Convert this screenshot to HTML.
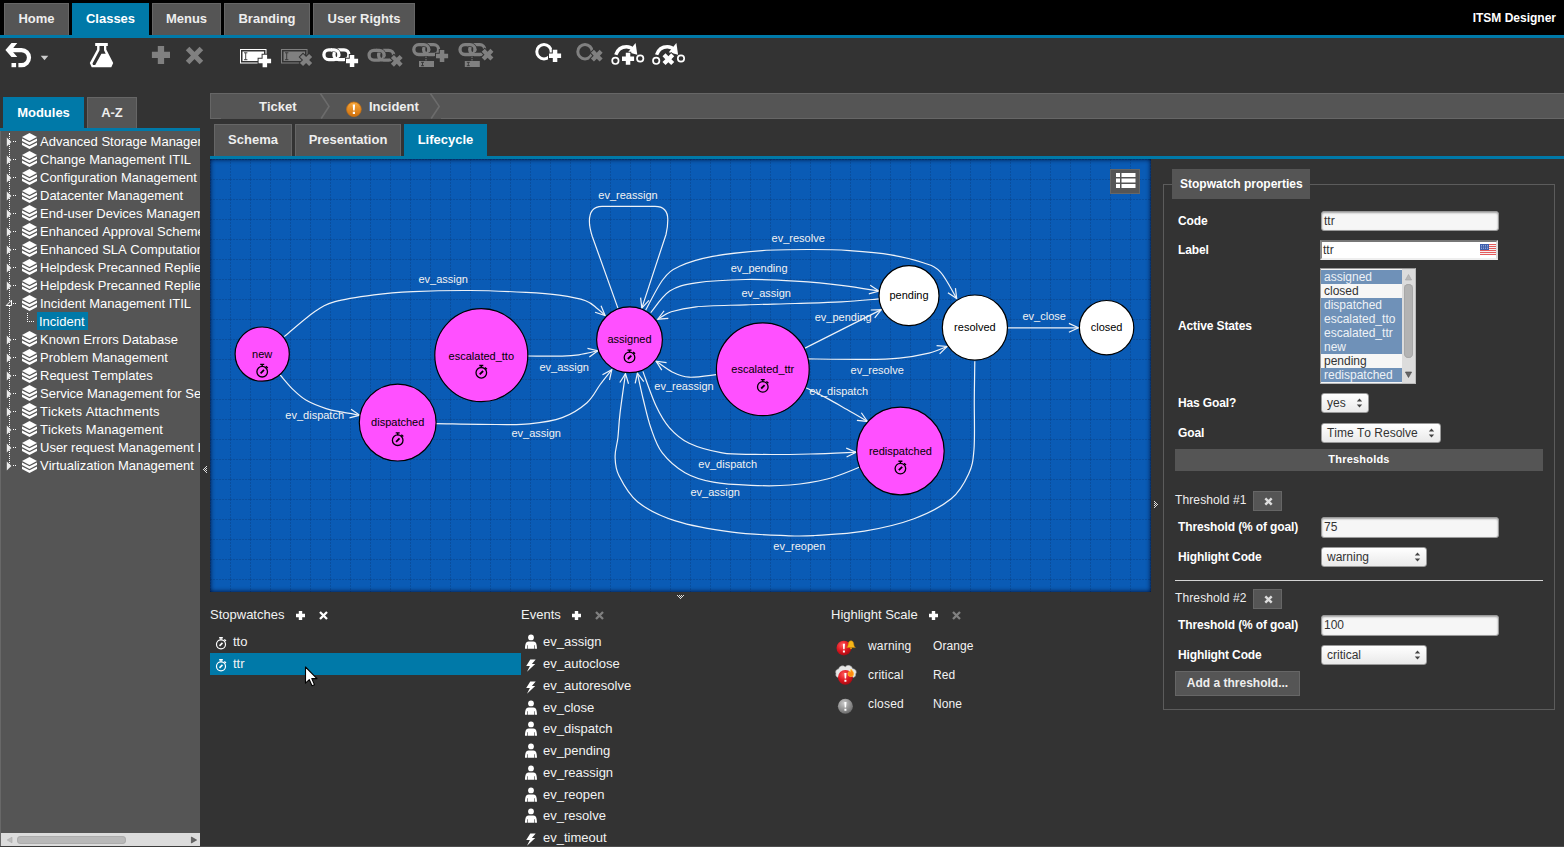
<!DOCTYPE html>
<html lang="en">
<head>
<meta charset="utf-8">
<title>ITSM Designer</title>
<style>
*{box-sizing:border-box;margin:0;padding:0}
html,body{width:1564px;height:847px;overflow:hidden;background:#333;color:#fff;font-family:"Liberation Sans",Arial,sans-serif;font-size:13px;font-kerning:none;text-rendering:optimizeSpeed}
.abs{position:absolute}
#top{position:absolute;left:0;top:0;width:1564px;height:35px;background:#000}
#topline{position:absolute;left:0;top:35px;width:1564px;height:3px;background:#0079a8}
.tab{position:absolute;background:#555;border:1px solid #666;color:#eee;font-weight:bold;font-size:13px;text-align:center;white-space:nowrap}
.tab.on{background:#0079a8;border-color:#0079a8;color:#fff}
#top .tab{top:3px;height:32px;line-height:30px;border-bottom:none}
#title{position:absolute;right:8px;top:11px;font-size:12px;font-weight:bold;line-height:15px;color:#fff}
/* left panel */
#ltabs .tab{top:97px;height:31px;line-height:29px;border-bottom:none}
#lline{position:absolute;left:0;top:128px;width:200px;height:3px;background:#0079a8}
#tree{position:absolute;left:0;top:131px;width:200px;height:716px;background:#555;overflow:hidden;box-shadow:inset 1px 0 0 #686868}
.tr{position:absolute;left:0;height:18px;line-height:18px;white-space:nowrap;font-size:13px;color:#fff}
.tr .tx{position:absolute;left:40px;top:0}
.tr svg{position:absolute;left:22px;top:0}
#hs{position:absolute;left:1px;top:833px;width:199px;height:13px;background:#dcdcdc}
/* centre */
#crumb{position:absolute;left:210px;top:93px;width:1354px;height:26px;background:#555;border:1px solid #666;border-right:none}
#crumb .t{position:absolute;top:0;line-height:25px;font-weight:bold;font-size:13px;color:#eee}
#ctabs .tab{top:124px;height:32px;line-height:30px;border-bottom:none}
#cline{position:absolute;left:210px;top:156px;width:1354px;height:3px;background:#0079a8}
#canvas{position:absolute;left:210px;top:159px;width:941px;height:433px;background:#0a5bb5;overflow:hidden}
#canvas:after{content:"";position:absolute;left:0;top:0;right:0;bottom:0;box-shadow:inset 0 0 5px 0 rgba(0,0,25,.9);pointer-events:none}
/* right */
#fs{position:absolute;left:1163px;top:184px;width:392px;height:526px;border:1px solid #5c5c5c}
#legend{position:absolute;left:1172px;top:169px;width:138px;height:30px;background:#555;font-weight:bold;font-size:12px;line-height:30px;padding-left:8px;color:#fff}
.lbl{position:absolute;left:1178px;font-weight:bold;font-size:12px;line-height:14px;color:#fff;white-space:nowrap;letter-spacing:-.12px}
.inp{position:absolute;background:#f6f6f6;border:1px solid #999;border-radius:3px;color:#333;font-size:12px;line-height:16px;padding-left:2px;box-shadow:inset 0 1px 2px rgba(0,0,0,.35)}
.sel{position:absolute;background:linear-gradient(#fff,#e9e9e9);border:1px solid #999;border-radius:3px;color:#333;font-size:12px;line-height:16px;padding-left:5px}
.txt{position:absolute;font-size:13px;line-height:15px;color:#eee;white-space:nowrap}
.btn{position:absolute;background:#555;border:1px solid #666;color:#eee;font-weight:bold;font-size:12px;text-align:center}
</style>
</head>
<body>
<div id="top">
  <div class="tab" style="left:4px;width:65px">Home</div>
  <div class="tab on" style="left:72px;width:77px">Classes</div>
  <div class="tab" style="left:152px;width:69px">Menus</div>
  <div class="tab" style="left:224px;width:86px">Branding</div>
  <div class="tab" style="left:313px;width:102px">User Rights</div>
  <div id="title">ITSM Designer</div>
</div>
<div id="topline"></div>
<!--TOOLBAR-->
<svg class="abs" style="left:0;top:38px" width="720" height="44" viewBox="0 38 720 44">
<path d="M17.3,43H11.5L5.4,50L11.5,57H17.3L13.2,52.2V48z" fill="#fff"/>
<path d="M12.5,50.1H21.5A7.5,7.5 0 0 1 21.5,65.1H18.4" fill="none" stroke="#fff" stroke-width="4.2"/>
<rect x="11.5" y="63" width="4.6" height="4.2" fill="#fff"/>
<path d="M40.7,55.8H48.3L44.5,60.3z" fill="#ccc"/>
<path fill-rule="evenodd" d="M95.2,43H107.8V46H106.3V49.5L113.2,63L111.3,67.2H91.7L89.8,63L97.1,49.5V46H95.2z M99.5,46H104V50.2L105.7,53.7H101.4L95.2,65H93L92.5,63.6L99.5,50.3z" fill="#fff"/>
<path d="M157.8,45.9h6.3v5.9h5.9v6.3h-5.9v5.9h-6.3v-5.9h-5.9v-6.3h5.9z" fill="#808080"/>
<path d="M187.6,48.4L201.4,62.6M201.4,48.4L187.6,62.6" stroke="#808080" stroke-width="5" fill="none"/>
<rect x="240.5" y="49.5" width="25.5" height="13.5" fill="none" stroke="#fff"/><rect x="242.5" y="51.5" width="21.5" height="9.5" fill="#fff"/>
<path d="M244,52.8h3.4M244,59.7h3.4M245.7,52.8v6.9" stroke="#333" stroke-width="0.9" fill="none"/>
<path d="M262.6,54.7h4.5v4.0h4.0v4.5h-4.0v4.0h-4.5v-4.0h-4.0v-4.5h4.0z" fill="#fff" stroke="#333" stroke-width="2" paint-order="stroke"/>
<rect x="281.5" y="49.5" width="25.5" height="13.5" fill="none" stroke="#808080"/><rect x="283.5" y="51.5" width="21.5" height="9.5" fill="#808080"/>
<path d="M285,52.8h3.4M285,59.7h3.4M286.7,52.8v6.9" stroke="#333" stroke-width="0.9" fill="none"/>
<g transform="rotate(45 306.0 60.0)"><path d="M303.9,53.5h4.3v4.3h4.3v4.3h-4.3v4.3h-4.3v-4.3h-4.3v-4.3h4.3z" fill="#808080" stroke="#333" stroke-width="2" paint-order="stroke"/></g>
<rect x="323.9" y="49.8" width="15.0" height="9.8" rx="4.9" fill="none" stroke="#fff" stroke-width="3.3"/><path d="M341.4,49.8 h-2.6 a4.9,4.9 0 0 1 0,9.8 h2.6" fill="none" stroke="#333" stroke-width="4.5"/><rect x="333.9" y="49.8" width="15.0" height="9.8" rx="4.9" fill="none" stroke="#fff" stroke-width="3.3"/><path d="M332.0,49.8 h2 a4.9,4.9 0 0 1 4.9,4.9" fill="none" stroke="#333" stroke-width="4.5"/><path d="M331.0,49.8 h3 a4.9,4.9 0 0 1 4.9,4.9 v0.6" fill="none" stroke="#fff" stroke-width="3.3"/>
<path d="M349.8,54.9h4.5v3.8h3.8v4.5h-3.8v3.8h-4.5v-3.8h-3.8v-4.5h3.8z" fill="#fff" stroke="#333" stroke-width="2" paint-order="stroke"/>
<rect x="369.1" y="50.3" width="15.0" height="9.8" rx="4.9" fill="none" stroke="#808080" stroke-width="3.3"/><path d="M386.1,50.3 h-2.6 a4.9,4.9 0 0 1 0,9.8 h2.6" fill="none" stroke="#333" stroke-width="4.5"/><rect x="378.6" y="50.3" width="15.0" height="9.8" rx="4.9" fill="none" stroke="#808080" stroke-width="3.3"/><path d="M377.2,50.3 h2 a4.9,4.9 0 0 1 4.9,4.9" fill="none" stroke="#333" stroke-width="4.5"/><path d="M376.2,50.3 h3 a4.9,4.9 0 0 1 4.9,4.9 v0.6" fill="none" stroke="#808080" stroke-width="3.3"/>
<g transform="rotate(45 396.7 60.8)"><path d="M394.6,54.6h4.3v4.0h4.0v4.3h-4.0v4.0h-4.3v-4.0h-4.0v-4.3h4.0z" fill="#808080" stroke="#333" stroke-width="2" paint-order="stroke"/></g>
<rect x="413.8" y="44.7" width="15.0" height="9.8" rx="4.9" fill="none" stroke="#808080" stroke-width="3.3"/><path d="M431.1,44.7 h-2.6 a4.9,4.9 0 0 1 0,9.8 h2.6" fill="none" stroke="#333" stroke-width="4.5"/><rect x="423.6" y="44.7" width="15.0" height="9.8" rx="4.9" fill="none" stroke="#808080" stroke-width="3.3"/><path d="M421.9,44.7 h2 a4.9,4.9 0 0 1 4.9,4.9" fill="none" stroke="#333" stroke-width="4.5"/><path d="M420.9,44.7 h3 a4.9,4.9 0 0 1 4.9,4.9 v0.6" fill="none" stroke="#808080" stroke-width="3.3"/>
<path d="M439.8,49.9h4.5v3.8h3.8v4.5h-3.8v3.8h-4.5v-3.8h-3.8v-4.5h3.8z" fill="#808080" stroke="#333" stroke-width="2" paint-order="stroke"/>
<path d="M426,56.5V61" stroke="#808080" stroke-width="1" stroke-dasharray="1.5,1" fill="none"/>
<rect x="419.0" y="61.0" width="15" height="6" fill="#808080"/><path d="M421.0,62.3h3M421.0,65.7h3M422.5,62.3v3.4" stroke="#333" stroke-width="0.9" fill="none"/>
<rect x="460.0" y="44.7" width="15.0" height="9.8" rx="4.9" fill="none" stroke="#808080" stroke-width="3.3"/><path d="M477.2,44.7 h-2.6 a4.9,4.9 0 0 1 0,9.8 h2.6" fill="none" stroke="#333" stroke-width="4.5"/><rect x="469.7" y="44.7" width="15.0" height="9.8" rx="4.9" fill="none" stroke="#808080" stroke-width="3.3"/><path d="M468.1,44.7 h2 a4.9,4.9 0 0 1 4.9,4.9" fill="none" stroke="#333" stroke-width="4.5"/><path d="M467.1,44.7 h3 a4.9,4.9 0 0 1 4.9,4.9 v0.6" fill="none" stroke="#808080" stroke-width="3.3"/>
<g transform="rotate(45 487.5 54.7)"><path d="M485.4,48.5h4.3v4.0h4.0v4.3h-4.0v4.0h-4.3v-4.0h-4.0v-4.3h4.0z" fill="#808080" stroke="#333" stroke-width="2" paint-order="stroke"/></g>
<path d="M472,56.5V61" stroke="#808080" stroke-width="1" stroke-dasharray="1.5,1" fill="none"/>
<rect x="464.8" y="61.0" width="15" height="6" fill="#808080"/><path d="M466.8,62.3h3M466.8,65.7h3M468.3,62.3v3.4" stroke="#333" stroke-width="0.9" fill="none"/>
<circle cx="544" cy="51.7" r="7.2" fill="none" stroke="#fff" stroke-width="3"/>
<path d="M552.8,49.8h4.5v3.8h3.8v4.5h-3.8v3.8h-4.5v-3.8h-3.8v-4.5h3.8z" fill="#fff" stroke="#333" stroke-width="2" paint-order="stroke"/>
<circle cx="585" cy="51.7" r="7.2" fill="none" stroke="#808080" stroke-width="3"/>
<g transform="rotate(45 596.7 55.7)"><path d="M594.6,49.5h4.3v4.0h4.0v4.3h-4.0v4.0h-4.3v-4.0h-4.0v-4.3h4.0z" fill="#808080" stroke="#333" stroke-width="2" paint-order="stroke"/></g>
<g transform="translate(0.0,0)">
<path d="M615.8,54.8Q618.5,46.8 626.5,46.8Q631,46.8 633.8,50" fill="none" stroke="#fff" stroke-width="3.4"/>
<path d="M635.6,43L637.3,54.8L628,52.2z" fill="#fff"/>
<circle cx="615.4" cy="60.8" r="3.2" fill="none" stroke="#fff" stroke-width="1.7"/><circle cx="640.2" cy="58.5" r="3.2" fill="none" stroke="#fff" stroke-width="1.7"/>
<path d="M625.8,52.7h4.5v3.8h3.8v4.5h-3.8v3.8h-4.5v-3.8h-3.8v-4.5h3.8z" fill="#fff" stroke="#333" stroke-width="2" paint-order="stroke"/>
</g>
<g transform="translate(40.8,0)">
<path d="M615.8,54.8Q618.5,46.8 626.5,46.8Q631,46.8 633.8,50" fill="none" stroke="#fff" stroke-width="3.4"/>
<path d="M635.6,43L637.3,54.8L628,52.2z" fill="#fff"/>
<circle cx="615.4" cy="60.8" r="3.2" fill="none" stroke="#fff" stroke-width="1.7"/><circle cx="640.2" cy="58.5" r="3.2" fill="none" stroke="#fff" stroke-width="1.7"/>
<g transform="rotate(45 627.5 59.2)"><path d="M625.4,53.0h4.3v4.0h4.0v4.3h-4.0v4.0h-4.3v-4.0h-4.0v-4.3h4.0z" fill="#fff" stroke="#333" stroke-width="2" paint-order="stroke"/></g>
</g>
</svg>
<!--/TOOLBAR-->
<div id="ltabs">
  <div class="tab on" style="left:3px;width:81px">Modules</div>
  <div class="tab" style="left:87px;width:50px">A-Z</div>
</div>
<div id="lline"></div>
<div id="tree">
<!--TREE-->
<div class="abs" style="left:9px;top:2px;width:0;height:334px;border-left:1px dotted #fff"></div>
<svg width="0" height="0" style="position:absolute"><defs><g id="stk" fill="#fff"><path d="M7.5,0L15,4L7.5,8L0,4z"/><path d="M0,5.4L7.5,9.3L15,5.4V8L7.5,12L0,8z"/><path d="M0,9.4L7.5,13.3L15,9.4V12L7.5,16L0,12z"/></g></defs></svg>
<div class="abs" style="left:13px;top:10px;width:3px;height:1px;background:linear-gradient(90deg,#fff 1px,transparent 1px,transparent 2px,#fff 2px)"></div>
<svg class="abs" style="left:6px;top:6px" width="6" height="10" viewBox="0 0 6 10"><path d="M0.8,0.4L5.4,5L0.8,9.6z" fill="#ececec"/></svg>
<div class="tr" style="top:2px"><svg width="15" height="16" viewBox="0 0 15 16"><use href="#stk"/></svg><span class="tx">Advanced Storage Management</span></div>
<div class="abs" style="left:13px;top:28px;width:3px;height:1px;background:linear-gradient(90deg,#fff 1px,transparent 1px,transparent 2px,#fff 2px)"></div>
<svg class="abs" style="left:6px;top:24px" width="6" height="10" viewBox="0 0 6 10"><path d="M0.8,0.4L5.4,5L0.8,9.6z" fill="#ececec"/></svg>
<div class="tr" style="top:20px"><svg width="15" height="16" viewBox="0 0 15 16"><use href="#stk"/></svg><span class="tx">Change Management ITIL</span></div>
<div class="abs" style="left:13px;top:46px;width:3px;height:1px;background:linear-gradient(90deg,#fff 1px,transparent 1px,transparent 2px,#fff 2px)"></div>
<svg class="abs" style="left:6px;top:42px" width="6" height="10" viewBox="0 0 6 10"><path d="M0.8,0.4L5.4,5L0.8,9.6z" fill="#ececec"/></svg>
<div class="tr" style="top:38px"><svg width="15" height="16" viewBox="0 0 15 16"><use href="#stk"/></svg><span class="tx">Configuration Management</span></div>
<div class="abs" style="left:13px;top:64px;width:3px;height:1px;background:linear-gradient(90deg,#fff 1px,transparent 1px,transparent 2px,#fff 2px)"></div>
<svg class="abs" style="left:6px;top:60px" width="6" height="10" viewBox="0 0 6 10"><path d="M0.8,0.4L5.4,5L0.8,9.6z" fill="#ececec"/></svg>
<div class="tr" style="top:56px"><svg width="15" height="16" viewBox="0 0 15 16"><use href="#stk"/></svg><span class="tx">Datacenter Management</span></div>
<div class="abs" style="left:13px;top:82px;width:3px;height:1px;background:linear-gradient(90deg,#fff 1px,transparent 1px,transparent 2px,#fff 2px)"></div>
<svg class="abs" style="left:6px;top:78px" width="6" height="10" viewBox="0 0 6 10"><path d="M0.8,0.4L5.4,5L0.8,9.6z" fill="#ececec"/></svg>
<div class="tr" style="top:74px"><svg width="15" height="16" viewBox="0 0 15 16"><use href="#stk"/></svg><span class="tx">End-user Devices Management</span></div>
<div class="abs" style="left:13px;top:100px;width:3px;height:1px;background:linear-gradient(90deg,#fff 1px,transparent 1px,transparent 2px,#fff 2px)"></div>
<svg class="abs" style="left:6px;top:96px" width="6" height="10" viewBox="0 0 6 10"><path d="M0.8,0.4L5.4,5L0.8,9.6z" fill="#ececec"/></svg>
<div class="tr" style="top:92px"><svg width="15" height="16" viewBox="0 0 15 16"><use href="#stk"/></svg><span class="tx">Enhanced Approval Scheme</span></div>
<div class="abs" style="left:13px;top:118px;width:3px;height:1px;background:linear-gradient(90deg,#fff 1px,transparent 1px,transparent 2px,#fff 2px)"></div>
<svg class="abs" style="left:6px;top:114px" width="6" height="10" viewBox="0 0 6 10"><path d="M0.8,0.4L5.4,5L0.8,9.6z" fill="#ececec"/></svg>
<div class="tr" style="top:110px"><svg width="15" height="16" viewBox="0 0 15 16"><use href="#stk"/></svg><span class="tx">Enhanced SLA Computation</span></div>
<div class="abs" style="left:13px;top:136px;width:3px;height:1px;background:linear-gradient(90deg,#fff 1px,transparent 1px,transparent 2px,#fff 2px)"></div>
<svg class="abs" style="left:6px;top:132px" width="6" height="10" viewBox="0 0 6 10"><path d="M0.8,0.4L5.4,5L0.8,9.6z" fill="#ececec"/></svg>
<div class="tr" style="top:128px"><svg width="15" height="16" viewBox="0 0 15 16"><use href="#stk"/></svg><span class="tx">Helpdesk Precanned Replies</span></div>
<div class="abs" style="left:13px;top:154px;width:3px;height:1px;background:linear-gradient(90deg,#fff 1px,transparent 1px,transparent 2px,#fff 2px)"></div>
<svg class="abs" style="left:6px;top:150px" width="6" height="10" viewBox="0 0 6 10"><path d="M0.8,0.4L5.4,5L0.8,9.6z" fill="#ececec"/></svg>
<div class="tr" style="top:146px"><svg width="15" height="16" viewBox="0 0 15 16"><use href="#stk"/></svg><span class="tx">Helpdesk Precanned Replies</span></div>
<div class="abs" style="left:13px;top:172px;width:3px;height:1px;background:linear-gradient(90deg,#fff 1px,transparent 1px,transparent 2px,#fff 2px)"></div>
<svg class="abs" style="left:5px;top:168px" width="8" height="8" viewBox="0 0 8 8"><path d="M6.5,1.2V6.5H1.2z" fill="#666" stroke="#fff" stroke-width="1"/></svg>
<div class="tr" style="top:164px"><svg width="15" height="16" viewBox="0 0 15 16"><use href="#stk"/></svg><span class="tx">Incident Management ITIL</span></div>
<div class="abs" style="left:27px;top:182px;width:0;height:9px;border-left:1px dotted #fff"></div>
<div class="abs" style="left:27px;top:190px;width:7px;height:1px;background:repeating-linear-gradient(90deg,#fff 0,#fff 1px,transparent 1px,transparent 2px)"></div>
<div class="abs" style="left:37px;top:181px;width:51px;height:18px;background:#0079a8"></div>
<div class="tr" style="top:182px"><span class="tx" style="left:39px">Incident</span></div>
<div class="abs" style="left:13px;top:208px;width:3px;height:1px;background:linear-gradient(90deg,#fff 1px,transparent 1px,transparent 2px,#fff 2px)"></div>
<svg class="abs" style="left:6px;top:204px" width="6" height="10" viewBox="0 0 6 10"><path d="M0.8,0.4L5.4,5L0.8,9.6z" fill="#ececec"/></svg>
<div class="tr" style="top:200px"><svg width="15" height="16" viewBox="0 0 15 16"><use href="#stk"/></svg><span class="tx">Known Errors Database</span></div>
<div class="abs" style="left:13px;top:226px;width:3px;height:1px;background:linear-gradient(90deg,#fff 1px,transparent 1px,transparent 2px,#fff 2px)"></div>
<svg class="abs" style="left:6px;top:222px" width="6" height="10" viewBox="0 0 6 10"><path d="M0.8,0.4L5.4,5L0.8,9.6z" fill="#ececec"/></svg>
<div class="tr" style="top:218px"><svg width="15" height="16" viewBox="0 0 15 16"><use href="#stk"/></svg><span class="tx">Problem Management</span></div>
<div class="abs" style="left:13px;top:244px;width:3px;height:1px;background:linear-gradient(90deg,#fff 1px,transparent 1px,transparent 2px,#fff 2px)"></div>
<svg class="abs" style="left:6px;top:240px" width="6" height="10" viewBox="0 0 6 10"><path d="M0.8,0.4L5.4,5L0.8,9.6z" fill="#ececec"/></svg>
<div class="tr" style="top:236px"><svg width="15" height="16" viewBox="0 0 15 16"><use href="#stk"/></svg><span class="tx">Request Templates</span></div>
<div class="abs" style="left:13px;top:262px;width:3px;height:1px;background:linear-gradient(90deg,#fff 1px,transparent 1px,transparent 2px,#fff 2px)"></div>
<svg class="abs" style="left:6px;top:258px" width="6" height="10" viewBox="0 0 6 10"><path d="M0.8,0.4L5.4,5L0.8,9.6z" fill="#ececec"/></svg>
<div class="tr" style="top:254px"><svg width="15" height="16" viewBox="0 0 15 16"><use href="#stk"/></svg><span class="tx">Service Management for Service Providers</span></div>
<div class="abs" style="left:13px;top:280px;width:3px;height:1px;background:linear-gradient(90deg,#fff 1px,transparent 1px,transparent 2px,#fff 2px)"></div>
<svg class="abs" style="left:6px;top:276px" width="6" height="10" viewBox="0 0 6 10"><path d="M0.8,0.4L5.4,5L0.8,9.6z" fill="#ececec"/></svg>
<div class="tr" style="top:272px"><svg width="15" height="16" viewBox="0 0 15 16"><use href="#stk"/></svg><span class="tx" style="letter-spacing:.13px">Tickets Attachments</span></div>
<div class="abs" style="left:13px;top:298px;width:3px;height:1px;background:linear-gradient(90deg,#fff 1px,transparent 1px,transparent 2px,#fff 2px)"></div>
<svg class="abs" style="left:6px;top:294px" width="6" height="10" viewBox="0 0 6 10"><path d="M0.8,0.4L5.4,5L0.8,9.6z" fill="#ececec"/></svg>
<div class="tr" style="top:290px"><svg width="15" height="16" viewBox="0 0 15 16"><use href="#stk"/></svg><span class="tx" style="letter-spacing:.13px">Tickets Management</span></div>
<div class="abs" style="left:13px;top:316px;width:3px;height:1px;background:linear-gradient(90deg,#fff 1px,transparent 1px,transparent 2px,#fff 2px)"></div>
<svg class="abs" style="left:6px;top:312px" width="6" height="10" viewBox="0 0 6 10"><path d="M0.8,0.4L5.4,5L0.8,9.6z" fill="#ececec"/></svg>
<div class="tr" style="top:308px"><svg width="15" height="16" viewBox="0 0 15 16"><use href="#stk"/></svg><span class="tx">User request Management ITIL</span></div>
<div class="abs" style="left:13px;top:334px;width:3px;height:1px;background:linear-gradient(90deg,#fff 1px,transparent 1px,transparent 2px,#fff 2px)"></div>
<svg class="abs" style="left:6px;top:330px" width="6" height="10" viewBox="0 0 6 10"><path d="M0.8,0.4L5.4,5L0.8,9.6z" fill="#ececec"/></svg>
<div class="tr" style="top:326px"><svg width="15" height="16" viewBox="0 0 15 16"><use href="#stk"/></svg><span class="tx">Virtualization Management</span></div>
<!--/TREE-->
</div>
<div id="hs"><div class="abs" style="left:16px;top:3px;width:109px;height:8px;border-radius:4px;background:#b9b9b9;box-shadow:inset 0 0 0 1px #adadad"></div><svg class="abs" style="left:0;top:0" width="200" height="13" viewBox="0 0 200 13"><path d="M6.2,7L11,4.2V9.8z" fill="#bdbdbd" stroke="#aaa" stroke-width="0.6"/><path d="M195.6,7L190.4,4V10z" fill="#666" stroke="#444" stroke-width="0.6"/></svg></div>
<div class="abs" style="left:0;top:846px;width:200px;height:1px;background:#3c3c3c"></div>
<svg class="abs" style="left:202px;top:465px" width="6" height="9" viewBox="202 465 6 9" fill="#ddd" shape-rendering="crispEdges"><path d="M203,469h1v1h-1zM204,468h1v1h-1zM204,470h1v1h-1zM205,467h1v1h-1zM205,469h1v1h-1zM205,471h1v1h-1zM206,466h1v1h-1zM206,468h1v1h-1zM206,470h1v1h-1zM206,472h1v1h-1z"/></svg>
<svg class="abs" style="left:1153px;top:500px" width="6" height="9" viewBox="1153 500 6 9" fill="#ddd" shape-rendering="crispEdges"><path d="M1157,504h1v1h-1zM1156,503h1v1h-1zM1156,505h1v1h-1zM1155,502h1v1h-1zM1155,504h1v1h-1zM1155,506h1v1h-1zM1154,501h1v1h-1zM1154,503h1v1h-1zM1154,505h1v1h-1zM1154,507h1v1h-1z"/></svg>
<svg class="abs" style="left:676px;top:594px" width="9" height="6" viewBox="676 594 9 6" fill="#ddd" shape-rendering="crispEdges"><path d="M677,595h1v1h-1zM679,595h1v1h-1zM681,595h1v1h-1zM683,595h1v1h-1zM678,596h1v1h-1zM680,596h1v1h-1zM682,596h1v1h-1zM679,597h1v1h-1zM681,597h1v1h-1zM680,598h1v1h-1z"/></svg>
<div id="crumb">
  <span class="t" style="left:48px">Ticket</span>
  <span class="t" style="left:158px">Incident</span>
  <div class="abs" style="left:10px;top:24px;width:220px;height:1px;background:#555"></div>
  <svg class="abs" style="left:-1px;top:-1px" width="260" height="26" viewBox="209 93 260 26"><defs><linearGradient id="og" x1="0" y1="0" x2="0" y2="1"><stop offset="0" stop-color="#f7a83c"/><stop offset="1" stop-color="#cf6f0c"/></linearGradient></defs><path d="M319.4,93.5L328,106.4L320.2,118.5M429.4,93.5L438.2,106.4L430.2,118.5" fill="none" stroke="#6c6c6c" stroke-width="1.6"/><circle cx="352.9" cy="109.3" r="7.3" fill="url(#og)" stroke="#c9700f" stroke-width="0.8"/><path d="M351.7,104.6h2.4l-0.45,6h-1.5zM351.8,111.8h2.2v2.1h-2.2z" fill="#fff"/></svg>
</div>
<div id="ctabs">
  <div class="tab" style="left:214px;width:78px">Schema</div>
  <div class="tab" style="left:295px;width:106px">Presentation</div>
  <div class="tab on" style="left:404px;width:83px">Lifecycle</div>
</div>
<div id="cline"></div>
<div id="canvas">
<!--CANVAS-->
<svg class="abs" style="left:0;top:0" width="941" height="433" viewBox="210 159 941 433">
<defs>
<pattern id="g" x="210" y="159" width="20" height="20" patternUnits="userSpaceOnUse"><path d="M0,0.5H20M0.5,0V20" stroke="#084690" stroke-width="1" stroke-dasharray="2,1" stroke-opacity="0.6" fill="none"/></pattern>
<marker id="a" markerUnits="userSpaceOnUse" markerWidth="14" markerHeight="12" refX="12" refY="6" orient="auto"><path d="M2.4,1.6L12,6L2.4,10.4" fill="none" stroke="#eef2f8" stroke-width="1.2"/></marker>
<g id="sw" fill="none" stroke="#000" stroke-width="1.3"><circle cx="0" cy="1" r="5.3"/><path d="M-2,-6.3H2M0,-6.3V-4M3.6,-4.4L5.6,-2.6" stroke-width="1.4"/><path d="M-1.6,2.6L1.8,-0.8" stroke-width="1.8"/></g>
</defs>
<rect x="210" y="159" width="941" height="433" fill="url(#g)"/>
<g fill="none" stroke="#eef2f8" stroke-width="1.2" marker-end="url(#a)">
<path d="M284.3,336.6 C289.3,332.5 305.8,317.8 314.2,312.0 C322.6,306.2 325.0,304.5 335.0,301.6 C345.0,298.7 361.0,296.5 374.0,294.8 C387.0,293.1 396.9,292.3 412.9,291.6 C428.9,290.9 451.1,290.4 470.0,290.5 C488.9,290.6 511.2,291.6 526.1,292.4 C541.0,293.2 549.3,293.8 559.2,295.2 C569.1,296.6 579.3,298.5 585.6,300.7 C591.9,302.9 594.0,306.0 597.2,308.5 C600.5,311.0 603.8,314.3 605.1,315.5"/>
<path d="M280.2,375.0 C282.4,377.4 288.8,385.4 293.1,389.6 C297.5,393.8 300.8,397.1 306.3,400.3 C311.8,403.5 320.1,406.6 326.1,408.6 C332.2,410.6 337.0,411.1 342.6,412.2 C348.2,413.3 356.9,414.7 359.7,415.2"/>
<path d="M527.9,356.0 C533.6,356.0 553.7,356.3 562.2,356.1 C570.7,355.9 572.9,355.7 578.8,354.8 C584.7,353.9 594.6,351.4 597.8,350.7"/>
<path d="M435.8,423.7 C445.9,423.8 480.5,424.5 496.1,424.5 C511.7,424.5 518.2,425.0 529.2,423.9 C540.2,422.8 552.6,421.1 562.2,417.6 C571.8,414.1 580.7,408.2 587.0,402.7 C593.3,397.2 596.1,390.0 600.2,384.5 C604.3,379.0 609.9,372.2 611.8,369.7"/>
<path d="M645.7,310.1 C648.6,305.0 657.4,286.8 663.0,279.5 C668.6,272.2 671.3,270.2 679.6,266.3 C687.9,262.4 698.8,259.0 712.6,256.4 C726.4,253.8 745.7,251.8 762.2,250.6 C778.7,249.4 797.2,249.5 811.8,249.5 C826.4,249.5 836.4,249.7 849.6,250.6 C862.8,251.5 878.5,252.7 890.9,254.8 C903.3,256.9 915.7,260.1 924.0,263.0 C932.3,265.9 935.0,266.2 940.5,272.1 C946.0,278.0 954.0,294.2 956.7,298.6"/>
<path d="M650.7,312.6 C653.9,309.0 662.1,296.1 669.7,291.1 C677.3,286.2 683.4,284.8 696.1,282.9 C708.8,281.0 729.2,279.8 745.7,279.5 C762.2,279.2 779.4,280.2 795.3,281.2 C811.2,282.2 827.3,283.6 841.3,285.3 C855.2,287.0 872.7,290.1 879.0,291.1"/>
<path d="M879.3,298.9 C873.0,299.4 855.3,301.1 841.3,301.9 C827.3,302.7 811.2,303.0 795.3,303.5 C779.4,304.0 762.2,304.2 745.7,304.8 C729.2,305.4 708.5,305.6 696.1,306.8 C683.7,308.0 677.7,309.7 671.3,311.8 C664.9,313.9 660.0,318.0 657.8,319.2"/>
<path d="M805.0,348.1 C817.7,341.7 868.6,316.0 881.3,309.6"/>
<path d="M806.6,358.9 C816.5,359.0 850.7,359.5 866.1,359.4 C881.5,359.3 888.7,359.2 899.2,358.1 C909.7,357.1 920.9,355.0 928.9,353.1 C936.9,351.2 944.1,347.6 947.1,346.5"/>
<path d="M716.4,374.7 C711.9,375.1 696.5,377.6 689.2,377.2 C681.9,376.8 678.1,374.9 672.6,372.2 C667.1,369.5 658.9,363.0 656.1,361.2"/>
<path d="M806.1,387.7 C809.6,389.5 820.4,394.8 827.2,398.4 C834.0,402.0 840.3,405.7 847.0,409.5 C853.7,413.3 864.0,419.4 867.4,421.4"/>
<path d="M642.9,371.4 C645.1,377.2 651.7,396.7 656.1,406.1 C660.5,415.5 663.8,421.4 669.3,427.6 C674.8,433.8 680.4,439.1 689.2,443.3 C698.0,447.5 711.2,451.0 722.2,452.9 C733.2,454.8 740.7,454.2 755.3,454.4 C769.9,454.6 793.2,454.4 810.0,454.0 C826.8,453.6 848.3,452.5 856.0,452.2"/>
<path d="M859.4,467.3 C854.0,469.2 838.8,476.1 827.2,479.0 C815.6,481.9 802.7,483.9 790.0,485.0 C777.3,486.1 763.9,485.9 751.1,485.4 C738.3,484.9 724.3,484.3 713.3,482.2 C702.3,480.1 693.5,477.6 685.0,472.7 C676.5,467.8 668.0,460.3 662.3,452.9 C656.6,445.5 654.1,437.1 651.0,428.3 C647.9,419.5 645.7,409.2 643.4,400.0 C641.1,390.8 638.4,377.6 637.4,373.1"/>
<path d="M974.8,361.2 C974.7,367.7 974.4,385.3 974.3,400.0 C974.2,414.7 975.0,436.9 974.0,449.2 C973.0,461.5 972.4,465.7 968.6,474.0 C964.8,482.3 960.3,491.4 951.2,498.8 C942.1,506.2 928.5,513.3 914.0,518.7 C899.5,524.1 880.9,528.3 864.4,531.1 C847.9,533.9 827.4,534.7 814.8,535.5 C802.2,536.3 802.7,536.3 788.9,535.8 C775.1,535.2 751.1,534.7 732.2,532.2 C713.3,529.7 691.2,525.9 675.5,520.9 C659.8,515.9 647.2,509.6 637.8,502.0 C628.4,494.4 622.7,483.1 618.9,475.5 C615.1,467.9 615.3,463.0 615.1,456.7 C614.9,450.4 617.1,445.1 617.9,437.8 C618.7,430.5 618.8,423.3 620.1,412.6 C621.4,401.9 624.6,380.1 625.5,373.6"/>
<path d="M1007.7,327.8 C1019.5,327.8 1066.7,327.8 1078.5,327.8"/>
<path d="M617.9,308.1 L592.2,236.2 C590.2,230 589.4,226 589.4,221.3 C589.4,212 593,206.4 602,206.4 L655,206.4 C664,206.4 667.8,212 667.8,219.7 C667.8,225 667.4,229 666.0,234.5 L641.8,308.1"/>
</g>
<g font-family="'Liberation Sans',Arial,sans-serif" font-size="11" text-anchor="middle">
<g fill="#f2f2f2">
<text x="443.2" y="283.1">ev_assign</text>
<text x="314.7" y="419.0">ev_dispatch</text>
<text x="564.2" y="370.8">ev_assign</text>
<text x="536.2" y="436.6">ev_assign</text>
<text x="628.0" y="199.0">ev_reassign</text>
<text x="798.2" y="241.5">ev_resolve</text>
<text x="759.1" y="271.8">ev_pending</text>
<text x="766.2" y="296.9">ev_assign</text>
<text x="843.2" y="320.9">ev_pending</text>
<text x="877.2" y="374.0">ev_resolve</text>
<text x="684.0" y="390.4">ev_reassign</text>
<text x="838.7" y="395.4">ev_dispatch</text>
<text x="727.7" y="467.7">ev_dispatch</text>
<text x="715.2" y="495.9">ev_assign</text>
<text x="799.3" y="550.0">ev_reopen</text>
<text x="1044.2" y="319.8">ev_close</text>
</g>
<circle cx="262.2" cy="354.1" r="27.1" fill="#ff50ff" stroke="#000" stroke-width="1.2"/>
<text x="262.2" y="358.4" fill="#000">new</text>
<use href="#sw" x="262.2" y="370.7"/>
<circle cx="481.3" cy="355.2" r="46.5" fill="#ff50ff" stroke="#000" stroke-width="1.2"/>
<text x="481.3" y="359.5" fill="#000">escalated_tto</text>
<use href="#sw" x="481.3" y="371.8"/>
<circle cx="397.7" cy="422.6" r="38.4" fill="#ff50ff" stroke="#000" stroke-width="1.2"/>
<text x="397.7" y="425.9" fill="#000">dispatched</text>
<use href="#sw" x="397.7" y="439.2"/>
<circle cx="629.5" cy="339.8" r="32.9" fill="#ff50ff" stroke="#000" stroke-width="1.2"/>
<text x="629.5" y="343.1" fill="#000">assigned</text>
<use href="#sw" x="629.5" y="356.4"/>
<circle cx="762.8" cy="369.3" r="46.4" fill="#ff50ff" stroke="#000" stroke-width="1.2"/>
<text x="762.8" y="372.6" fill="#000">escalated_ttr</text>
<use href="#sw" x="762.8" y="385.9"/>
<circle cx="909.0" cy="295.7" r="30.0" fill="#fff" stroke="#000" stroke-width="1.2"/>
<text x="909.0" y="299.0" fill="#000">pending</text>
<circle cx="974.9" cy="327.6" r="32.6" fill="#fff" stroke="#000" stroke-width="1.2"/>
<text x="974.9" y="330.9" fill="#000">resolved</text>
<circle cx="1106.6" cy="327.7" r="27.2" fill="#fff" stroke="#000" stroke-width="1.2"/>
<text x="1106.6" y="331.0" fill="#000">closed</text>
<circle cx="900.4" cy="451.0" r="43.8" fill="#ff50ff" stroke="#000" stroke-width="1.2"/>
<text x="900.4" y="455.3" fill="#000">redispatched</text>
<use href="#sw" x="900.4" y="467.6"/>
</g>
</svg>
<div class="abs" style="left:900px;top:10px;width:30px;height:25px;background:#555;border:1px solid #666"><svg class="abs" style="left:5px;top:3px" width="20" height="16" viewBox="0 0 20 16"><path d="M0,0h4v4h-4zM5.5,0h14v4h-14zM0,5.5h4v4h-4zM5.5,5.5h14v4h-14zM0,11h4v4h-4zM5.5,11h14v4h-14z" fill="#fff"/></svg></div>
<!--/CANVAS-->
</div>
<!--RIGHT-->
<div id="fs"></div>
<div id="legend">Stopwatch properties</div>
<div class="lbl" style="top:214px">Code</div>
<div class="inp" style="left:1321px;top:211px;width:178px;height:20px;line-height:18px">ttr</div>
<div class="lbl" style="top:243px">Label</div>
<div class="abs" style="left:1320px;top:240px;width:178px;height:20px;background:#fff;border:2px solid;border-color:#777 #ddd #eee #888;color:#333;font-size:12px;line-height:16px;padding-left:1px">ttr</div>
<svg class="abs" style="left:1480px;top:244px" width="16" height="11" viewBox="0 0 16 11"><rect width="16" height="11" fill="#f6f0f0"/><path d="M0,0.5h16M0,2.5h16M0,4.5h16M0,6.5h16M0,8.5h16M0,10.5h16" stroke="#e2494b" stroke-width="0.9"/><rect width="9" height="6" fill="#3f5fae"/><path d="M1,1.5h7M1,3h7M1,4.5h7" stroke="#cfd8f0" stroke-width="0.7" stroke-dasharray="0.8,1.2"/></svg>
<div class="lbl" style="top:319px">Active States</div>
<div class="abs" style="left:1320px;top:268px;width:96px;height:116px;background:#f6f6f6;border:1px solid #bbb;border-top-color:#999;border-left-color:#999"></div>
<div class="abs" style="left:1321px;top:270px;width:81px;height:14px;line-height:14px;font-size:12px;padding-left:3px;white-space:nowrap;overflow:hidden;background:#6f91b8;color:#eef2f6">assigned</div>
<div class="abs" style="left:1321px;top:284px;width:81px;height:14px;line-height:14px;font-size:12px;padding-left:3px;white-space:nowrap;overflow:hidden;color:#333">closed</div>
<div class="abs" style="left:1321px;top:298px;width:81px;height:14px;line-height:14px;font-size:12px;padding-left:3px;white-space:nowrap;overflow:hidden;background:#6f91b8;color:#eef2f6">dispatched</div>
<div class="abs" style="left:1321px;top:312px;width:81px;height:14px;line-height:14px;font-size:12px;padding-left:3px;white-space:nowrap;overflow:hidden;background:#6f91b8;color:#eef2f6">escalated_tto</div>
<div class="abs" style="left:1321px;top:326px;width:81px;height:14px;line-height:14px;font-size:12px;padding-left:3px;white-space:nowrap;overflow:hidden;background:#6f91b8;color:#eef2f6">escalated_ttr</div>
<div class="abs" style="left:1321px;top:340px;width:81px;height:14px;line-height:14px;font-size:12px;padding-left:3px;white-space:nowrap;overflow:hidden;background:#6f91b8;color:#eef2f6">new</div>
<div class="abs" style="left:1321px;top:354px;width:81px;height:14px;line-height:14px;font-size:12px;padding-left:3px;white-space:nowrap;overflow:hidden;color:#333">pending</div>
<div class="abs" style="left:1321px;top:368px;width:81px;height:14px;line-height:14px;font-size:12px;padding-left:3px;white-space:nowrap;overflow:hidden;background:#6f91b8;color:#eef2f6">redispatched</div>
<div class="abs" style="left:1402px;top:269px;width:13px;height:114px;background:#dcdcdc"></div>
<div class="abs" style="left:1404px;top:284px;width:9px;height:74px;background:#b3b3b3;border-radius:4.5px;box-shadow:inset 0 0 0 1px #a8a8a8"></div>
<svg class="abs" style="left:1402px;top:269px" width="13" height="114" viewBox="0 0 13 114"><path d="M6.5,5.5L9.6,11H3.4z" fill="#b9b9b9" stroke="#a5a5a5" stroke-width="0.6"/><path d="M6.5,108.5L9.6,103H3.4z" fill="#666" stroke="#444" stroke-width="0.6"/></svg>
<div class="lbl" style="top:396px">Has Goal?</div>
<div class="sel" style="left:1321px;top:393px;width:48px;height:20px;line-height:18px">yes<svg class="abs" style="right:5px;top:3px" width="7" height="12" viewBox="0 0 7 12"><path d="M3.5,1.5L6.2,4.6H0.8zM3.5,10.5L6.2,7.4H0.8z" fill="#444"/></svg></div>
<div class="lbl" style="top:426px">Goal</div>
<div class="sel" style="left:1321px;top:423px;width:120px;height:20px;line-height:18px">Time To Resolve<svg class="abs" style="right:5px;top:3px" width="7" height="12" viewBox="0 0 7 12"><path d="M3.5,1.5L6.2,4.6H0.8zM3.5,10.5L6.2,7.4H0.8z" fill="#444"/></svg></div>
<div class="abs" style="left:1175px;top:449px;width:368px;height:22px;background:#555;text-align:center;font-weight:bold;font-size:11px;line-height:21px;color:#fff;letter-spacing:.2px">Thresholds</div>
<div class="txt" style="left:1175px;top:493px;font-size:12px;letter-spacing:.12px">Threshold #1</div>
<div class="btn" style="left:1253px;top:491px;width:29px;height:20px"><svg class="abs" style="left:10px;top:5px" width="9" height="9" viewBox="0 0 9 9"><path d="M1.3,1.3L7.7,7.7M7.7,1.3L1.3,7.7" stroke="#ddd" stroke-width="2.4"/></svg></div>
<div class="lbl" style="top:520px">Threshold (% of goal)</div>
<div class="inp" style="left:1321px;top:517px;width:178px;height:21px;line-height:19px">75</div>
<div class="lbl" style="top:550px">Highlight Code</div>
<div class="sel" style="left:1321px;top:547px;width:106px;height:20px;line-height:18px">warning<svg class="abs" style="right:5px;top:3px" width="7" height="12" viewBox="0 0 7 12"><path d="M3.5,1.5L6.2,4.6H0.8zM3.5,10.5L6.2,7.4H0.8z" fill="#444"/></svg></div>
<div class="abs" style="left:1175px;top:580px;width:368px;height:1px;background:#d4d4d4"></div>
<div class="txt" style="left:1175px;top:591px;font-size:12px;letter-spacing:.12px">Threshold #2</div>
<div class="btn" style="left:1253px;top:589px;width:29px;height:20px"><svg class="abs" style="left:10px;top:5px" width="9" height="9" viewBox="0 0 9 9"><path d="M1.3,1.3L7.7,7.7M7.7,1.3L1.3,7.7" stroke="#ddd" stroke-width="2.4"/></svg></div>
<div class="lbl" style="top:618px">Threshold (% of goal)</div>
<div class="inp" style="left:1321px;top:615px;width:178px;height:21px;line-height:19px">100</div>
<div class="lbl" style="top:648px">Highlight Code</div>
<div class="sel" style="left:1321px;top:645px;width:106px;height:20px;line-height:18px">critical<svg class="abs" style="right:5px;top:3px" width="7" height="12" viewBox="0 0 7 12"><path d="M3.5,1.5L6.2,4.6H0.8zM3.5,10.5L6.2,7.4H0.8z" fill="#444"/></svg></div>
<div class="btn" style="left:1175px;top:671px;width:125px;height:25px;line-height:23px">Add a threshold...</div>
<!--/RIGHT-->
<!--BOTTOM-->
<div class="txt" style="left:210px;top:607px;font-size:13px;color:#f2f2f2">Stopwatches</div>
<svg class="abs" style="left:296.0px;top:611px" width="9" height="9" viewBox="0 0 9 9"><path d="M2.8,0h3.4v2.8h2.8v3.4h-2.8v2.8h-3.4v-2.8h-2.8v-3.4h2.8z" fill="#fff"/></svg>
<svg class="abs" style="left:319.0px;top:611px" width="9" height="9" viewBox="0 0 9 9"><path d="M1,1L8,8M8,1L1,8" stroke="#fff" stroke-width="2.3"/></svg>
<div class="txt" style="left:521px;top:607px;font-size:13px;color:#f2f2f2">Events</div>
<svg class="abs" style="left:571.8px;top:611px" width="9" height="9" viewBox="0 0 9 9"><path d="M2.8,0h3.4v2.8h2.8v3.4h-2.8v2.8h-3.4v-2.8h-2.8v-3.4h2.8z" fill="#fff"/></svg>
<svg class="abs" style="left:595.1px;top:611px" width="9" height="9" viewBox="0 0 9 9"><path d="M1,1L8,8M8,1L1,8" stroke="#808080" stroke-width="2.3"/></svg>
<div class="txt" style="left:831px;top:607px;font-size:13px;color:#f2f2f2">Highlight Scale</div>
<svg class="abs" style="left:929.0px;top:611px" width="9" height="9" viewBox="0 0 9 9"><path d="M2.8,0h3.4v2.8h2.8v3.4h-2.8v2.8h-3.4v-2.8h-2.8v-3.4h2.8z" fill="#fff"/></svg>
<svg class="abs" style="left:951.8px;top:611px" width="9" height="9" viewBox="0 0 9 9"><path d="M1,1L8,8M8,1L1,8" stroke="#808080" stroke-width="2.3"/></svg>
<div class="abs" style="left:210px;top:653px;width:311px;height:22px;background:#0079a8"></div>
<svg class="abs" style="left:215.3px;top:636.8px" width="12" height="12.9" viewBox="-6.5 -7 13 14"><g fill="none" stroke="#fff" stroke-width="1.3"><circle cx="0" cy="1" r="4.9"/><path d="M-2,-6.2H2M0,-6.2V-4M3.6,-4.3L5.4,-2.6" stroke-width="1.4"/><path d="M-1.6,2.6L1.6,-0.6" stroke-width="1.7"/></g></svg>
<div class="txt" style="left:233px;top:634px;font-size:13px;color:#f2f2f2">tto</div>
<svg class="abs" style="left:215.3px;top:658.8px" width="12" height="12.9" viewBox="-6.5 -7 13 14"><g fill="none" stroke="#fff" stroke-width="1.3"><circle cx="0" cy="1" r="4.9"/><path d="M-2,-6.2H2M0,-6.2V-4M3.6,-4.3L5.4,-2.6" stroke-width="1.4"/><path d="M-1.6,2.6L1.6,-0.6" stroke-width="1.7"/></g></svg>
<div class="txt" style="left:233px;top:656px;font-size:13px;color:#f2f2f2">ttr</div>
<svg class="abs" style="left:303px;top:665px" width="16" height="24" viewBox="0 0 16 24"><path d="M2.5,2V18.2L6.3,14.6L9,20.8L11.5,19.7L8.8,13.6H14z" fill="#fff" stroke="#000" stroke-width="1.1" stroke-linejoin="round"/></svg>
<svg class="abs" style="left:524px;top:634px" width="14" height="16" viewBox="0 0 14 16"><circle cx="7" cy="3.4" r="2.9" fill="#fff"/><path d="M1,14.8C1,10.5 1.8,7.4 4.5,7.4H9.5C12.2,7.4 13,10.5 13,14.8H10.9V11.2H10.3V14.8H3.7V11.2H3.1V14.8z" fill="#fff"/></svg>
<div class="txt" style="left:543px;top:634px;font-size:13px;color:#f2f2f2">ev_assign</div>
<svg class="abs" style="left:525px;top:659px" width="12" height="14" viewBox="0 0 12 14"><path d="M5.3,0.4H10.7L6.9,5H10.2L2,12.8L4.9,7H1.2z" fill="#fff"/></svg>
<div class="txt" style="left:543px;top:656px;font-size:13px;color:#f2f2f2">ev_autoclose</div>
<svg class="abs" style="left:525px;top:681px" width="12" height="14" viewBox="0 0 12 14"><path d="M5.3,0.4H10.7L6.9,5H10.2L2,12.8L4.9,7H1.2z" fill="#fff"/></svg>
<div class="txt" style="left:543px;top:678px;font-size:13px;color:#f2f2f2">ev_autoresolve</div>
<svg class="abs" style="left:524px;top:700px" width="14" height="16" viewBox="0 0 14 16"><circle cx="7" cy="3.4" r="2.9" fill="#fff"/><path d="M1,14.8C1,10.5 1.8,7.4 4.5,7.4H9.5C12.2,7.4 13,10.5 13,14.8H10.9V11.2H10.3V14.8H3.7V11.2H3.1V14.8z" fill="#fff"/></svg>
<div class="txt" style="left:543px;top:700px;font-size:13px;color:#f2f2f2">ev_close</div>
<svg class="abs" style="left:524px;top:721px" width="14" height="16" viewBox="0 0 14 16"><circle cx="7" cy="3.4" r="2.9" fill="#fff"/><path d="M1,14.8C1,10.5 1.8,7.4 4.5,7.4H9.5C12.2,7.4 13,10.5 13,14.8H10.9V11.2H10.3V14.8H3.7V11.2H3.1V14.8z" fill="#fff"/></svg>
<div class="txt" style="left:543px;top:721px;font-size:13px;color:#f2f2f2">ev_dispatch</div>
<svg class="abs" style="left:524px;top:743px" width="14" height="16" viewBox="0 0 14 16"><circle cx="7" cy="3.4" r="2.9" fill="#fff"/><path d="M1,14.8C1,10.5 1.8,7.4 4.5,7.4H9.5C12.2,7.4 13,10.5 13,14.8H10.9V11.2H10.3V14.8H3.7V11.2H3.1V14.8z" fill="#fff"/></svg>
<div class="txt" style="left:543px;top:743px;font-size:13px;color:#f2f2f2">ev_pending</div>
<svg class="abs" style="left:524px;top:765px" width="14" height="16" viewBox="0 0 14 16"><circle cx="7" cy="3.4" r="2.9" fill="#fff"/><path d="M1,14.8C1,10.5 1.8,7.4 4.5,7.4H9.5C12.2,7.4 13,10.5 13,14.8H10.9V11.2H10.3V14.8H3.7V11.2H3.1V14.8z" fill="#fff"/></svg>
<div class="txt" style="left:543px;top:765px;font-size:13px;color:#f2f2f2">ev_reassign</div>
<svg class="abs" style="left:524px;top:787px" width="14" height="16" viewBox="0 0 14 16"><circle cx="7" cy="3.4" r="2.9" fill="#fff"/><path d="M1,14.8C1,10.5 1.8,7.4 4.5,7.4H9.5C12.2,7.4 13,10.5 13,14.8H10.9V11.2H10.3V14.8H3.7V11.2H3.1V14.8z" fill="#fff"/></svg>
<div class="txt" style="left:543px;top:787px;font-size:13px;color:#f2f2f2">ev_reopen</div>
<svg class="abs" style="left:524px;top:808px" width="14" height="16" viewBox="0 0 14 16"><circle cx="7" cy="3.4" r="2.9" fill="#fff"/><path d="M1,14.8C1,10.5 1.8,7.4 4.5,7.4H9.5C12.2,7.4 13,10.5 13,14.8H10.9V11.2H10.3V14.8H3.7V11.2H3.1V14.8z" fill="#fff"/></svg>
<div class="txt" style="left:543px;top:808px;font-size:13px;color:#f2f2f2">ev_resolve</div>
<svg class="abs" style="left:525px;top:833px" width="12" height="14" viewBox="0 0 12 14"><path d="M5.3,0.4H10.7L6.9,5H10.2L2,12.8L4.9,7H1.2z" fill="#fff"/></svg>
<div class="txt" style="left:543px;top:830px;font-size:13px;color:#f2f2f2">ev_timeout</div>
<div class="txt" style="left:868px;top:639px;font-size:12px;letter-spacing:.2px;color:#f2f2f2">warning</div>
<div class="txt" style="left:933px;top:639px;font-size:12px;letter-spacing:.1px;color:#f2f2f2">Orange</div>
<div class="txt" style="left:868px;top:668px;font-size:12px;letter-spacing:.2px;color:#f2f2f2">critical</div>
<div class="txt" style="left:933px;top:668px;font-size:12px;letter-spacing:.1px;color:#f2f2f2">Red</div>
<div class="txt" style="left:868px;top:697px;font-size:12px;letter-spacing:.2px;color:#f2f2f2">closed</div>
<div class="txt" style="left:933px;top:697px;font-size:12px;letter-spacing:.1px;color:#f2f2f2">None</div>
<svg class="abs" style="left:830px;top:636px" width="30" height="80" viewBox="830 636 30 80"><defs><radialGradient id="rg" cx="40%" cy="30%" r="75%"><stop offset="0" stop-color="#ff5a5a"/><stop offset="0.55" stop-color="#dd1620"/><stop offset="1" stop-color="#9c0a10"/></radialGradient><radialGradient id="gg" cx="40%" cy="30%" r="75%"><stop offset="0" stop-color="#c8c8c8"/><stop offset="0.6" stop-color="#8e8e8e"/><stop offset="1" stop-color="#666"/></radialGradient></defs><circle cx="843.9" cy="648.1" r="7.4" fill="url(#rg)"/><g transform="translate(843.9,648.3)"><path d="M-1.1,-4.6h2.2l-0.4,5.6h-1.4zM-1,2.2h2v2h-2z" fill="#fff"/></g><path d="M851,640.8c2,0 2.6,1.8 2.8,3.6c0.2,1.6 0.8,2.4 1.6,3.2h-8.8c0.8,-0.8 1.4,-1.6 1.6,-3.2c0.2,-1.8 0.8,-3.6 2.8,-3.6z" fill="#f7b718" stroke="#c98708" stroke-width="0.5"/><circle cx="851" cy="648.2" r="1" fill="#e09a10"/><path d="M836,673.5a3.2,3.2 0 0 1 2.6,-4.6a4,4 0 0 1 6.6,-2a4.2,4.2 0 0 1 7.4,1.8a3.4,3.4 0 0 1 3,5.4a3,3 0 0 1 -2.6,3.4h-15a3.2,3.2 0 0 1 -2,-4z" fill="#e8e8e8" stroke="#aaa" stroke-width="0.6"/><circle cx="845.4" cy="677.3" r="7.4" fill="url(#rg)"/><g transform="translate(845.4,677.5)"><path d="M-1.1,-4.6h2.2l-0.4,5.6h-1.4zM-1,2.2h2v2h-2z" fill="#fff"/></g><path d="M851,669c0.6,1.6 2.8,2.4 2.8,4.8a2.9,2.9 0 0 1 -5.8,0c0,-1.2 0.6,-2 1.2,-2.6c0.2,0.8 0.6,1.2 1,1.2c0.4,-1 0.2,-2.2 0.8,-3.4z" fill="#ff8a10" stroke="#ffd23c" stroke-width="0.5"/><circle cx="845.4" cy="706.3" r="7.5" fill="url(#gg)"/><g transform="translate(845.4,706.5)"><path d="M-1.1,-4.6h2.2l-0.4,5.6h-1.4zM-1,2.2h2v2h-2z" fill="#fff"/></g></svg>
<div class="abs" style="left:200px;top:846px;width:1364px;height:1px;background:#4d4d4d"></div>
<!--/BOTTOM-->
</body>
</html>
